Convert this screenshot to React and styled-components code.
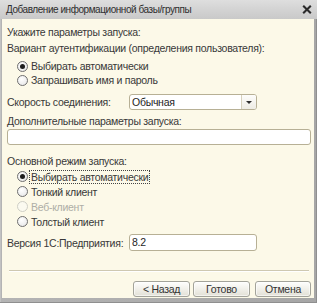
import React from "react";
import styled, { createGlobalStyle } from "styled-components";

const Global = createGlobalStyle`
  html, body { margin: 0; padding: 0; background: #ffffff; }
  body {
    font-family: "Liberation Sans", Arial, sans-serif;
    font-size: 10.5px;
    letter-spacing: -0.27px;
    color: #383838;
    white-space: nowrap;
  }
`;

const Window = styled.div`
  width: 317px;
  height: 303px;
  box-sizing: border-box;
  display: flex;
  flex-direction: column;
  background: linear-gradient(90deg, #b4b4b4, #a6a6a6);
  padding: 0 3px 5px 2px;
  box-shadow: inset -1px -1px 0 #8f8f8f, inset 1px 0 0 #c2c2c2;
`;

const TitleBar = styled.div`
  height: 19px;
  margin: 0 -3px 0 -2px;
  padding: 0 5px 0 6px;
  display: flex;
  align-items: center;
  justify-content: space-between;
  background: linear-gradient(#dedede, #d3d3d3 50%, #c9c9c9);
  color: #2e2e2e;
  font-size: 10px;
  letter-spacing: -0.45px;
`;

const CloseIcon = () => (
  <svg width="10" height="9" viewBox="0 0 10 9">
    <path d="M1.2 0.8 L8.8 8.2 M8.8 0.8 L1.2 8.2" stroke="#2b2b2b" strokeWidth="2.1" strokeLinecap="butt" />
  </svg>
);

const Body = styled.div`
  flex: 1;
  background: #fcf9e8;
  padding: 5px 3px 0 5px;
  display: flex;
  flex-direction: column;
`;

const Label = styled.div`
  height: ${(p) => p.h || 16}px;
  line-height: ${(p) => p.h || 16}px;
  margin-top: ${(p) => p.mt || 0}px;
`;

const RadioGroup = styled.div`
  display: flex;
  flex-direction: column;
  padding-left: 10px;
  margin-top: ${(p) => p.mt || 0}px;
`;

const RadioRow = styled.div`
  display: flex;
  align-items: center;
  height: ${(p) => p.h || 15}px;
  color: ${(p) => (p.disabled ? "#aeaea6" : "#383838")};
`;

const Circle = styled.span`
  width: 11px;
  height: 11px;
  border-radius: 50%;
  box-sizing: border-box;
  border: 1px solid ${(p) => (p.disabled ? "#cfcfc6" : "#6f6f6f")};
  background: ${(p) =>
    p.disabled ? "#fbfaf0" : "radial-gradient(circle at 40% 35%, #ffffff, #ececec 70%, #dcdcdc)"};
  display: flex;
  align-items: center;
  justify-content: center;
  margin-right: 1px;
  flex-shrink: 0;
`;

const Dot = styled.span`
  width: 5px;
  height: 5px;
  border-radius: 50%;
  background: #1e1e1e;
`;

const RadioText = styled.span`
  padding: 0 1px;
  border: 1px dotted ${(p) => (p.focused ? "#444" : "transparent")};
  line-height: 12px;
`;

const FieldRow = styled.div`
  display: flex;
  align-items: center;
  margin-top: ${(p) => p.mt || 0}px;
`;

const FieldLabel = styled.span`
  width: 122px;
  flex-shrink: 0;
`;

const Select = styled.div`
  width: 128px;
  height: 16px;
  box-sizing: border-box;
  border: 1px solid #b7b095;
  border-radius: 3px;
  background: #fff;
  display: flex;
  align-items: stretch;
  justify-content: space-between;
  padding-left: 2px;
  color: #1e1e1e;
  line-height: 14px;
  overflow: hidden;
`;

const Arrow = styled.span`
  width: 14px;
  border-left: 1px solid #d6d1bd;
  background: linear-gradient(#fdfdfb, #eeece4);
  display: flex;
  align-items: center;
  justify-content: center;
  &::after {
    content: "";
    border-left: 3px solid transparent;
    border-right: 3px solid transparent;
    border-top: 3px solid #2e2e2e;
  }
`;

const TextInput = styled.div`
  width: ${(p) => p.w || "auto"};
  height: ${(p) => p.h || 16}px;
  box-sizing: border-box;
  border: 1px solid #b7b095;
  border-radius: 3px;
  background: #fff;
  padding-left: 2px;
  line-height: ${(p) => (p.h || 16) - 2}px;
  color: #1e1e1e;
`;

const Separator = styled.div`
  height: 1px;
  background: #cec8b1;
  box-shadow: 0 1px 0 #ffffff;
  margin: 19px 2px 0 2px;
`;

const Buttons = styled.div`
  display: flex;
  justify-content: flex-end;
  margin-top: 10px;
`;

const Button = styled.div`
  width: ${(p) => p.w || 57}px;
  height: 16px;
  box-sizing: border-box;
  border: 1px solid #a3a39a;
  border-radius: 3px;
  background: linear-gradient(#fefefd, #f1f0ea 50%, #e2e0d6);
  box-shadow: inset 0 0 0 1px rgba(255, 255, 255, 0.6);
  display: flex;
  align-items: center;
  justify-content: center;
  color: #333;
  margin-left: ${(p) => p.ml || 0}px;
`;

export default function App() {
  return (
    <>
      <Global />
      <Window>
        <TitleBar>
          <span>Добавление информационной базы/группы</span>
          <CloseIcon />
        </TitleBar>
        <Body>
          <Label>Укажите параметры запуска:</Label>
          <Label>Вариант аутентификации (определения пользователя):</Label>
          <RadioGroup mt={3}>
            <RadioRow h={14}>
              <Circle><Dot /></Circle>
              <RadioText>Выбирать автоматически</RadioText>
            </RadioRow>
            <RadioRow h={14}>
              <Circle />
              <RadioText>Запрашивать имя и пароль</RadioText>
            </RadioRow>
          </RadioGroup>
          <FieldRow mt={7}>
            <FieldLabel>Скорость соединения:</FieldLabel>
            <Select>
              <span>Обычная</span>
              <Arrow />
            </Select>
          </FieldRow>
          <Label mt={4} h={15}>Дополнительные параметры запуска:</Label>
          <TextInput />
          <Label mt={8}>Основной режим запуска:</Label>
          <RadioGroup>
            <RadioRow>
              <Circle><Dot /></Circle>
              <RadioText focused>Выбирать автоматически</RadioText>
            </RadioRow>
            <RadioRow>
              <Circle />
              <RadioText>Тонкий клиент</RadioText>
            </RadioRow>
            <RadioRow disabled>
              <Circle disabled />
              <RadioText>Веб-клиент</RadioText>
            </RadioRow>
            <RadioRow>
              <Circle />
              <RadioText>Толстый клиент</RadioText>
            </RadioRow>
          </RadioGroup>
          <FieldRow mt={5}>
            <FieldLabel>Версия 1С:Предприятия:</FieldLabel>
            <TextInput w="128px" h={17}>8.2</TextInput>
          </FieldRow>
          <Separator />
          <Buttons>
            <Button w={57}>&lt; Назад</Button>
            <Button w={57} ml={3}>Готово</Button>
            <Button w={56} ml={5}>Отмена</Button>
          </Buttons>
        </Body>
      </Window>
    </>
  );
}
